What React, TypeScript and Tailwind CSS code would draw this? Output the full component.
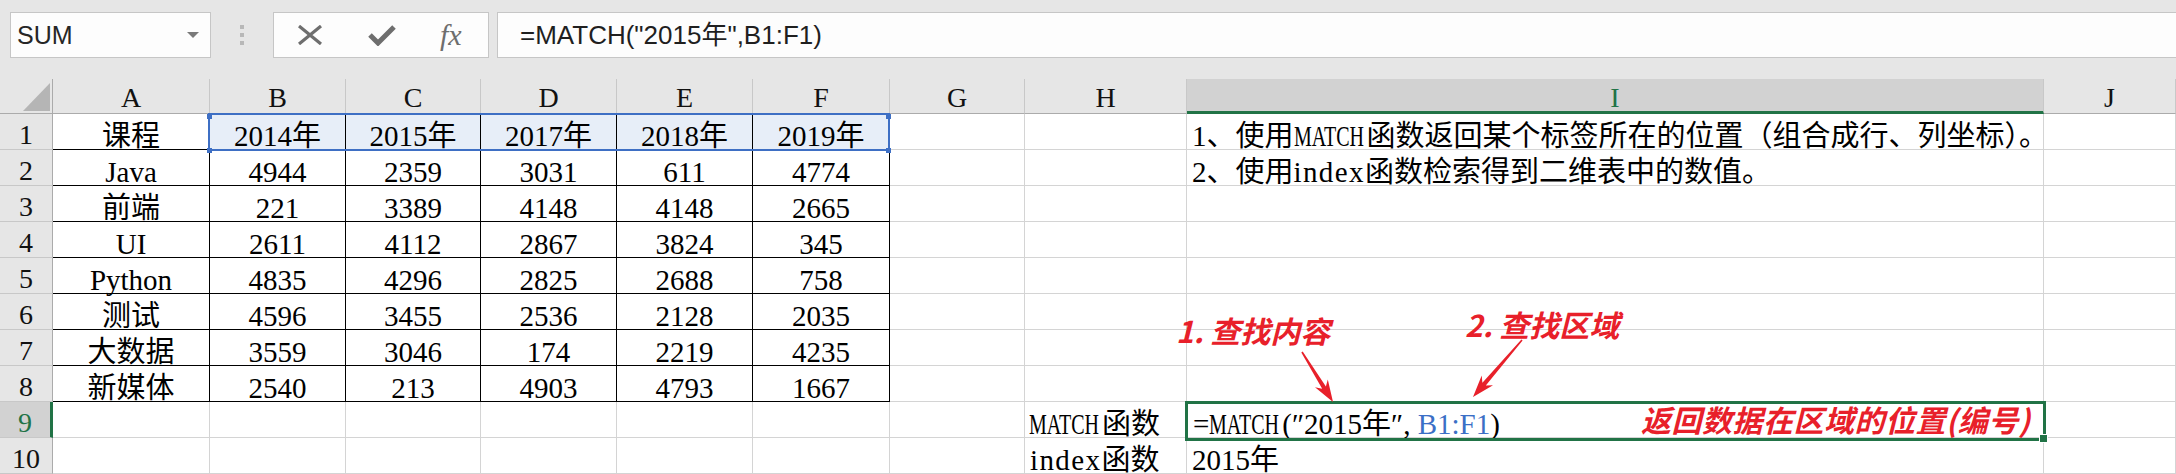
import React from "react";

const data: (string | number)[][] = [
  ["课程", "2014年", "2015年", "2017年", "2018年", "2019年"],
  ["Java", 4944, 2359, 3031, 611, 4774],
  ["前端", 221, 3389, 4148, 4148, 2665],
  ["UI", 2611, 4112, 2867, 3824, 345],
  ["Python", 4835, 4296, 2825, 2688, 758],
  ["测试", 4596, 3455, 2536, 2128, 2035],
  ["大数据", 3559, 3046, 174, 2219, 4235],
  ["新媒体", 2540, 213, 4903, 4793, 1667],
];

const COLS = ["A", "B", "C", "D", "E", "F", "G", "H", "I", "J"];

function Match() {
  return (
    <span className="inline-block w-[73px] whitespace-nowrap">
      <span className="inline-block origin-left scale-x-[0.69]">MATCH</span>
    </span>
  );
}

function arrowPoints(x1: number, y1: number, x2: number, y2: number) {
  const dx = x2 - x1;
  const dy = y2 - y1;
  const L = Math.hypot(dx, dy);
  const ux = dx / L;
  const uy = dy / L;
  const nx = -uy;
  const ny = ux;
  const hl = 22;
  const hw = 7.5;
  const notch = 17;
  const s0 = 0.8;
  const s1 = 2.2;
  const bx = x2 - ux * hl;
  const by = y2 - uy * hl;
  const kx = x2 - ux * notch;
  const ky = y2 - uy * notch;
  const pts: [number, number][] = [
    [x1 + nx * s0, y1 + ny * s0],
    [kx + nx * s1, ky + ny * s1],
    [bx + nx * hw, by + ny * hw],
    [x2, y2],
    [bx - nx * hw, by - ny * hw],
    [kx - nx * s1, ky - ny * s1],
    [x1 - nx * s0, y1 - ny * s0],
  ];
  return pts.map((p) => `${p[0].toFixed(1)},${p[1].toFixed(1)}`).join(" ");
}

function Toolbar() {
  return (
    <div className="flex h-[79px] items-start pl-[10px] pt-[12px]">
      <div className="flex h-[46px] w-[201px] items-center justify-between border border-[#c6c6c6] bg-[#fdfdfd] pl-[6px] pr-[11px]">
        <span className="font-['Liberation_Sans',sans-serif] text-[25px] leading-[25px] text-[#262626]">SUM</span>
        <svg width="12" height="6" viewBox="0 0 12 6">
          <path d="M0 0H12L6 6Z" fill="#7a7a7a" />
        </svg>
      </div>
      <div className="flex w-[62px] flex-col items-center gap-[4px] pt-[13px]">
        <div className="h-[4px] w-[4px] bg-[#b8b8b8]" />
        <div className="h-[4px] w-[4px] bg-[#b8b8b8]" />
        <div className="h-[4px] w-[4px] bg-[#b8b8b8]" />
      </div>
      <div className="flex h-[46px] w-[216px] items-center border border-[#c6c6c6] bg-[#fdfdfd] pl-[24px]">
        <svg width="24" height="20" viewBox="0 0 24 20">
          <path d="M1 1L23 19M23 1L1 19" stroke="#6e6e6e" strokeWidth="3.2" fill="none" />
        </svg>
        <svg className="ml-[46px]" width="28" height="22" viewBox="0 0 28 22">
          <path d="M2 11L10 19L26 3" stroke="#6e6e6e" strokeWidth="5" fill="none" strokeLinejoin="miter" />
        </svg>
        <span className="ml-[44px] font-['Liberation_Serif',serif] text-[30px] italic leading-[30px] text-[#6e6e6e]">fx</span>
      </div>
      <div className="ml-[8px] flex h-[46px] flex-1 items-center border border-r-0 border-[#c6c6c6] bg-[#fdfdfd] pl-[22px] font-['Liberation_Sans','Noto_Sans_CJK_SC',sans-serif] text-[26px] leading-[26px] text-[#1f1f1f]">
        =MATCH("2015年",B1:F1)
      </div>
    </div>
  );
}

const CELL_CENTER =
  "flex justify-center whitespace-nowrap border-b border-r border-black pt-[10px] text-[29px] leading-[24px]";
const CELL_CENTER_SEL =
  "flex justify-center whitespace-nowrap border-b border-r border-black bg-[#e7eef8] pt-[10px] text-[29px] leading-[24px]";
const CELL_PLAIN =
  "flex justify-start whitespace-nowrap border-b border-r border-[#d4d4d4] pl-[5px] pt-[10px] text-[29px] leading-[24px]";
const CELL_H =
  "flex justify-start whitespace-nowrap border-b border-r border-[#d4d4d4] pl-[4px] pt-[10px] text-[29px] leading-[24px]";
const CELL_I9 =
  "flex justify-start whitespace-nowrap border-b border-r border-[#d4d4d4] pl-[6px] pt-[10px] text-[29px] leading-[24px]";

function Sheet() {
  const cells: React.ReactNode[] = [];

  cells.push(
    <div key="corner" className="border-b border-r border-[#ababab] bg-[#e6e6e6]">
      <svg className="ml-[23px] mt-[4px] block" width="27" height="28" viewBox="0 0 27 28">
        <polygon points="27,0 27,28 0,28" fill="#b5b5b5" />
      </svg>
    </div>
  );

  COLS.forEach((c) => {
    cells.push(
      <div
        key={"h" + c}
        className={
          c === "I"
            ? "flex justify-center border-b-[3px] border-r border-b-[#217346] border-r-[#c8c8c8] bg-[#d2d2d2] pt-[6px] text-[28px] leading-[26px] text-[#217346]"
            : "flex justify-center border-b border-r border-b-[#ababab] border-r-[#c8c8c8] bg-[#e6e6e6] pt-[6px] text-[28px] leading-[26px] text-[#111]"
        }
      >
        {c}
      </div>
    );
  });

  for (let r = 1; r <= 10; r++) {
    cells.push(
      <div
        key={"r" + r}
        className={
          r === 9
            ? "flex justify-center border-b border-r-[3px] border-b-[#c8c8c8] border-r-[#217346] bg-[#d2d2d2] pt-[8px] text-[28px] leading-[26px] text-[#217346]"
            : "flex justify-center border-b border-r border-b-[#c8c8c8] border-r-[#ababab] bg-[#e6e6e6] pt-[8px] text-[28px] leading-[26px] text-[#111]"
        }
      >
        {r}
      </div>
    );

    COLS.forEach((c, ci) => {
      const key = c + r;
      if (ci <= 5 && r <= 8) {
        const v = data[r - 1][ci];
        cells.push(
          <div key={key} className={r === 1 && ci >= 1 ? CELL_CENTER_SEL : CELL_CENTER}>
            {v}
          </div>
        );
        return;
      }

      let content: React.ReactNode = null;
      let cls = CELL_PLAIN;
      if (c === "I" && r === 1) {
        content = (
          <span>
            1、使用<Match />函数返回某个标签所在的位置（组合成行、列坐标）。
          </span>
        );
      } else if (c === "I" && r === 2) {
        content = (
          <span>
            2、使用<span className="tracking-[1.4px]">index</span>函数检索得到二维表中的数值。
          </span>
        );
      } else if (c === "H" && r === 9) {
        cls = CELL_H;
        content = (
          <span>
            <Match />函数
          </span>
        );
      } else if (c === "H" && r === 10) {
        content = (
          <span>
            <span className="tracking-[1.4px]">index</span>函数
          </span>
        );
      } else if (c === "I" && r === 9) {
        cls = CELL_I9;
        content = (
          <span>
            =<Match />(″2015年″, <span className="text-[#3b6fc6]">B1:F1</span>)
          </span>
        );
      } else if (c === "I" && r === 10) {
        content = <span>2015年</span>;
      }
      cells.push(
        <div key={key} className={cls}>
          {content}
        </div>
      );
    });
  }

  const red = "#e8202a";
  const green = "#217346";
  const blue = "#3e6fc4";

  return (
    <div className="relative grid grid-cols-[53px_157px_136px_135px_136px_136px_137px_135px_162px_857px_1fr] grid-rows-[35px_repeat(10,36px)] bg-white font-['Liberation_Serif','Noto_Sans_CJK_SC',serif] text-black">
      {cells}

      {/* selection frames, handles and arrows drawn over the grid */}
      <svg className="pointer-events-none absolute left-0 top-0" width="2176" height="395" viewBox="0 0 2176 395">
        <rect x="209" y="35" width="680" height="36" fill="none" stroke={blue} strokeWidth="2" />
        <rect x="207" y="35" width="5" height="5" fill={blue} />
        <rect x="886" y="35" width="5" height="5" fill={blue} />
        <rect x="207" y="69" width="5" height="5" fill={blue} />
        <rect x="886" y="69" width="5" height="5" fill={blue} />

        <rect x="1186.5" y="323.5" width="858" height="37" fill="none" stroke={green} strokeWidth="3" />
        <rect x="2039.5" y="355.5" width="8" height="8" fill={green} stroke="#ffffff" strokeWidth="1" />

        <polygon points={arrowPoints(1302, 273, 1333, 323)} fill={red} />
        <polygon points={arrowPoints(1522, 261, 1473, 318)} fill={red} />
      </svg>

      <div className="pointer-events-none absolute left-[1176px] top-[236px] whitespace-nowrap font-['Noto_Sans_CJK_SC',sans-serif] text-[30px] font-bold italic leading-[30px] text-[#e8202a]">
        1. 查找内容
      </div>
      <div className="pointer-events-none absolute left-[1465px] top-[230px] whitespace-nowrap font-['Noto_Sans_CJK_SC',sans-serif] text-[30px] font-bold italic leading-[30px] text-[#e8202a]">
        2. 查找区域
      </div>
      <div className="pointer-events-none absolute left-[1641px] top-[325px] whitespace-nowrap font-['Noto_Sans_CJK_SC',sans-serif] text-[30px] font-bold italic leading-[30px] tracking-[0.5px] text-[#e8202a]">
        返回数据在区域的位置(编号)
      </div>
    </div>
  );
}

export default function App() {
  return (
    <div className="h-[474px] w-[2176px] overflow-hidden bg-[#e6e6e6]">
      <Toolbar />
      <Sheet />
    </div>
  );
}
